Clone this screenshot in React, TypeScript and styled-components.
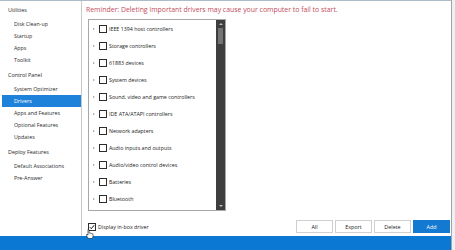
import React from "react";
import styled, { createGlobalStyle } from "styled-components";

const GlobalStyle = createGlobalStyle`
  html, body {
    margin: 0;
    padding: 0;
    background: #eef1f3;
  }
  body {
    font-family: "Open Sans", "Noto Sans", sans-serif;
  }
`;

const Screen = styled.div`
  position: relative;
  width: 455px;
  height: 250px;
  overflow: hidden;
  background: #eef1f3;
`;

const Window = styled.div`
  display: flex;
  flex-direction: column;
  width: 452px;
  height: 250px;
  border-right: 1px solid #9ea4a9;
  border-top: 1px solid #a9bcc8;
  box-sizing: border-box;
  background: #ffffff;
`;

const Body = styled.div`
  display: flex;
  flex: 1;
  min-height: 0;
`;

const Sidebar = styled.nav`
  width: 82px;
  border-right: 1px solid #c9c9c9;
  padding: 3px 0 0 2px;
  box-sizing: border-box;
  display: flex;
  flex-direction: column;
`;

const GroupTitle = styled.div<{ $first?: boolean }>`
  height: 12px;
  line-height: 12px;
  margin-top: ${(p) => (p.$first ? 0 : 3)}px;
  margin-bottom: 2px;
  padding-left: 6px;
  font-size: 5.4px;
  color: #1e1e1e;
  white-space: nowrap;
`;

const NavItem = styled.div<{ $active?: boolean }>`
  height: 12px;
  line-height: 12px;
  padding-left: 12px;
  font-size: 5.3px;
  white-space: nowrap;
  color: ${(p) => (p.$active ? "#ffffff" : "#2a2a2a")};
  background: ${(p) => (p.$active ? "#1f82da" : "transparent")};
`;

const Main = styled.main`
  flex: 1;
  display: flex;
  flex-direction: column;
  padding: 3px 1px 0 4px;
  min-width: 0;
`;

const Reminder = styled.div`
  height: 12px;
  line-height: 12px;
  font-size: 6.9px;
  color: #c24b5c;
  white-space: nowrap;
`;

const ListBox = styled.div`
  display: flex;
  width: 138px;
  height: 192px;
  margin: 3px 0 0 2px;
  border: 1px solid #a7a7a7;
  box-sizing: border-box;
`;

const Rows = styled.div`
  flex: 1;
  overflow: hidden;
`;

const Row = styled.div`
  display: flex;
  align-items: center;
  height: 17px;
  padding-left: 4px;
  gap: 2px;
`;

const Arrow = styled.span`
  width: 0;
  height: 0;
  border-top: 1.5px solid transparent;
  border-bottom: 1.5px solid transparent;
  border-left: 2px solid #9a9a9a;
  margin-right: 2px;
`;

const Box = styled.span`
  display: flex;
  align-items: center;
  justify-content: center;
  width: 8px;
  height: 8px;
  border: 1px solid #2d2d2d;
  box-sizing: border-box;
  background: #ffffff;
  flex: none;
`;

const RowLabel = styled.span`
  font-size: 5.3px;
  color: #222222;
  white-space: nowrap;
`;

const ScrollBar = styled.div`
  width: 9px;
  background: #3e3e3e;
  display: flex;
  flex-direction: column;
  align-items: center;
`;

const ScrollArrow = styled.div<{ $down?: boolean }>`
  height: 8px;
  display: flex;
  align-items: center;
  justify-content: center;
  &::before {
    content: "";
    border-left: 2px solid transparent;
    border-right: 2px solid transparent;
    ${(p) =>
      p.$down
        ? "border-top: 2px solid #bdbdbd;"
        : "border-bottom: 2px solid #bdbdbd;"}
  }
`;

const Thumb = styled.div`
  width: 5px;
  height: 16px;
  background: #747474;
`;

const Track = styled.div`
  flex: 1;
`;

const Footer = styled.div`
  display: flex;
  align-items: center;
  justify-content: space-between;
  margin-top: 9px;
  height: 13px;
`;

const CheckRow = styled.label`
  display: flex;
  align-items: center;
  gap: 2px;
  margin-left: 2px;
`;

const Buttons = styled.div`
  display: flex;
  gap: 2px;
`;

const Button = styled.button<{ $primary?: boolean }>`
  width: 37px;
  height: 13px;
  padding: 0;
  font-family: inherit;
  font-size: 5.4px;
  border: 1px solid ${(p) => (p.$primary ? "#1479d1" : "#cfcfcf")};
  background: ${(p) => (p.$primary ? "#1479d1" : "#ffffff")};
  color: ${(p) => (p.$primary ? "#ffffff" : "#222222")};
`;

const StatusBar = styled.div`
  height: 14px;
  background: #0b78d3;
  margin-top: auto;
`;

const Cursor = styled.svg`
  position: absolute;
  left: 86px;
  top: 229px;
`;

const devices = [
  "IEEE 1394 host controllers",
  "Storage controllers",
  "61883 devices",
  "System devices",
  "Sound, video and game controllers",
  "IDE ATA/ATAPI controllers",
  "Network adapters",
  "Audio inputs and outputs",
  "Audio/video control devices",
  "Batteries",
  "Bluetooth",
];

const groups = [
  { title: "Utilities", items: ["Disk Clean-up", "Startup", "Apps", "Toolkit"] },
  {
    title: "Control Panel",
    items: ["System Optimizer", "Drivers", "Apps and Features", "Optional Features", "Updates"],
  },
  { title: "Deploy Features", items: ["Default Associations", "Pre-Answer"] },
];

export default function App() {
  return (
    <>
      <GlobalStyle />
      <Screen>
        <Window>
          <Body>
            <Sidebar>
              {groups.map((g, i) => (
                <React.Fragment key={g.title}>
                  <GroupTitle $first={i === 0}>{g.title}</GroupTitle>
                  {g.items.map((item) => (
                    <NavItem key={item} $active={item === "Drivers"}>
                      {item}
                    </NavItem>
                  ))}
                </React.Fragment>
              ))}
            </Sidebar>
            <Main>
              <Reminder>
                Reminder: Deleting important drivers may cause your computer to fail to start.
              </Reminder>
              <ListBox>
                <Rows>
                  {devices.map((d) => (
                    <Row key={d}>
                      <Arrow />
                      <Box />
                      <RowLabel>{d}</RowLabel>
                    </Row>
                  ))}
                </Rows>
                <ScrollBar>
                  <ScrollArrow />
                  <Thumb />
                  <Track />
                  <ScrollArrow $down />
                </ScrollBar>
              </ListBox>
              <Footer>
                <CheckRow>
                  <Box>
                    <svg width="6" height="6" viewBox="0 0 6 6">
                      <path d="M0.8 3.2 L2.3 4.7 L5.2 1.2" fill="none" stroke="#1a1a1a" strokeWidth="1" />
                    </svg>
                  </Box>
                  <RowLabel>Display in-box driver</RowLabel>
                </CheckRow>
                <Buttons>
                  <Button>All</Button>
                  <Button>Export</Button>
                  <Button>Delete</Button>
                  <Button $primary>Add</Button>
                </Buttons>
              </Footer>
            </Main>
          </Body>
          <StatusBar />
        </Window>
        <Cursor width="8" height="10" viewBox="0 0 8 10">
          <path
            d="M2 0.5 L3 0.5 L3 4 L4 4 L5 4.3 L6 4.6 L7 5 L7 8 L6 9.5 L2.5 9.5 L1 7.5 L0.5 5.5 L1 5 L2 6 Z"
            fill="#ffffff"
            stroke="#111111"
            strokeWidth="0.6"
          />
        </Cursor>
      </Screen>
    </>
  );
}
